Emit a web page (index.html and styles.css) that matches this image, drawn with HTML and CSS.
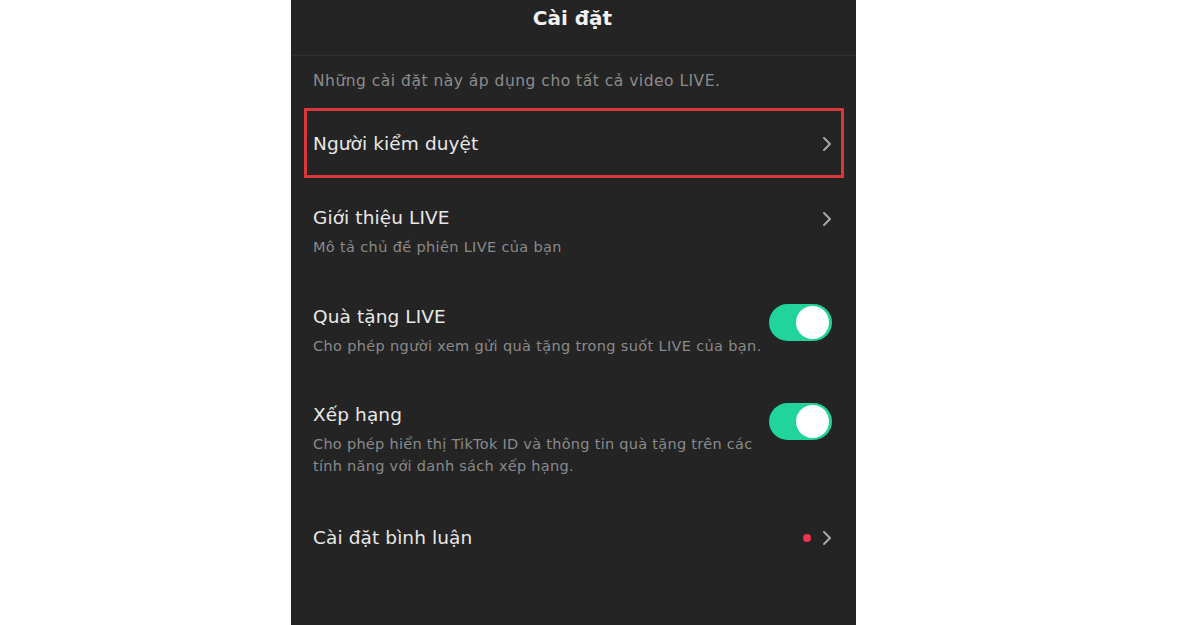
FILE: index.html
```html
<!DOCTYPE html>
<html lang="vi">
<head>
<meta charset="utf-8">
<title>Cài đặt</title>
<link rel="stylesheet" href="styles.css">
</head>
<body>
<div class="stage">
  <div class="panel">
    <header class="header"><h1 class="title">Cài đặt</h1></header>
    <p class="intro">Những cài đặt này áp dụng cho tất cả video LIVE.</p>
    <div class="row row-highlight">
      <div class="text"><div class="label">Người kiểm duyệt</div></div>
      <svg class="chev" viewBox="0 0 10 16" width="10" height="16"><path d="M2 2 L8 8 L2 14" fill="none" stroke="#a8a8a8" stroke-width="2" stroke-linecap="round" stroke-linejoin="round"/></svg>
    </div>
    <div class="row row-intro">
      <div class="text">
        <div class="label">Giới thiệu LIVE</div>
        <div class="desc">Mô tả chủ đề phiên LIVE của bạn</div>
      </div>
      <svg class="chev" viewBox="0 0 10 16" width="10" height="16"><path d="M2 2 L8 8 L2 14" fill="none" stroke="#a8a8a8" stroke-width="2" stroke-linecap="round" stroke-linejoin="round"/></svg>
    </div>
    <div class="row row-gift">
      <div class="text">
        <div class="label">Quà tặng LIVE</div>
        <div class="desc">Cho phép người xem gửi quà tặng trong suốt LIVE của bạn.</div>
      </div>
      <span class="toggle"><span class="knob"></span></span>
    </div>
    <div class="row row-rank">
      <div class="text">
        <div class="label">Xếp hạng</div>
        <div class="desc">Cho phép hiển thị TikTok ID và thông tin quà tặng trên các tính năng với danh sách xếp hạng.</div>
      </div>
      <span class="toggle"><span class="knob"></span></span>
    </div>
    <div class="row row-comment">
      <div class="text"><div class="label">Cài đặt bình luận</div></div>
      <span class="dot"></span>
      <svg class="chev" viewBox="0 0 10 16" width="10" height="16"><path d="M2 2 L8 8 L2 14" fill="none" stroke="#a8a8a8" stroke-width="2" stroke-linecap="round" stroke-linejoin="round"/></svg>
    </div>
  </div>
</div>
</body>
</html>
```
FILE: styles.css
```css
* { box-sizing: border-box; }
html, body { margin: 0; padding: 0; background: #ffffff; }
body { font-family: "DejaVu Sans", "Open Sans", sans-serif; }
.stage { padding-left: 291px; height: 625px; overflow: hidden; }
.panel { width: 565px; height: 625px; background: #242424; color: #e6e6e6; }
.header { height: 56px; border-bottom: 1px solid #303030; display: flex; justify-content: center; align-items: flex-start; }
.title { margin: 3px 0 0 -2px; font-size: 20px; font-weight: 700; color: #f2f2f2; line-height: 30px; }
.intro { margin: 0; padding: 14px 22px 0; font-size: 15.5px; letter-spacing: 0.5px; color: #8c8c8c; line-height: 22px; height: 52px; }
.row { display: flex; align-items: center; padding: 0 24px 0 22px; }
.text { flex: 1; min-width: 0; }
.label { font-size: 18.5px; letter-spacing: 0.1px; line-height: 24px; color: #e8e8e8; }
.desc { font-size: 14.5px; letter-spacing: 0.35px; line-height: 22px; color: #8a8a8a; margin-top: 6px; }
.chev { flex: none; }
.row-highlight { height: 70px; margin: 0 12px 0 13px; border: 3px solid #d8383c; padding: 2px 9px 0 6px; }
.row-intro { margin-top: 28px; height: 52px; align-items: flex-start; }
.row-intro .chev { margin-top: 5px; }
.row-gift { margin-top: 46px; align-items: flex-start; }
.row-gift .label { margin-top: 1px; }
.row-gift .desc { white-space: nowrap; margin-top: 6px; }
.toggle { flex: none; position: relative; width: 63px; height: 37px; border-radius: 19px; background: #20d49c; margin-top: 0; margin-left: 4px; }
.knob { position: absolute; right: 3px; top: 2px; width: 33px; height: 33px; border-radius: 50%; background: #ffffff; }
.row-rank { margin-top: 46px; align-items: flex-start; }
.row-rank .desc { letter-spacing: 0.28px; margin-right: -4px; margin-top: 6px; }
.row-comment { margin-top: 49px; }
.dot { flex: none; width: 8px; height: 8px; border-radius: 50%; background: #f0344f; margin-right: 11px; }
```
